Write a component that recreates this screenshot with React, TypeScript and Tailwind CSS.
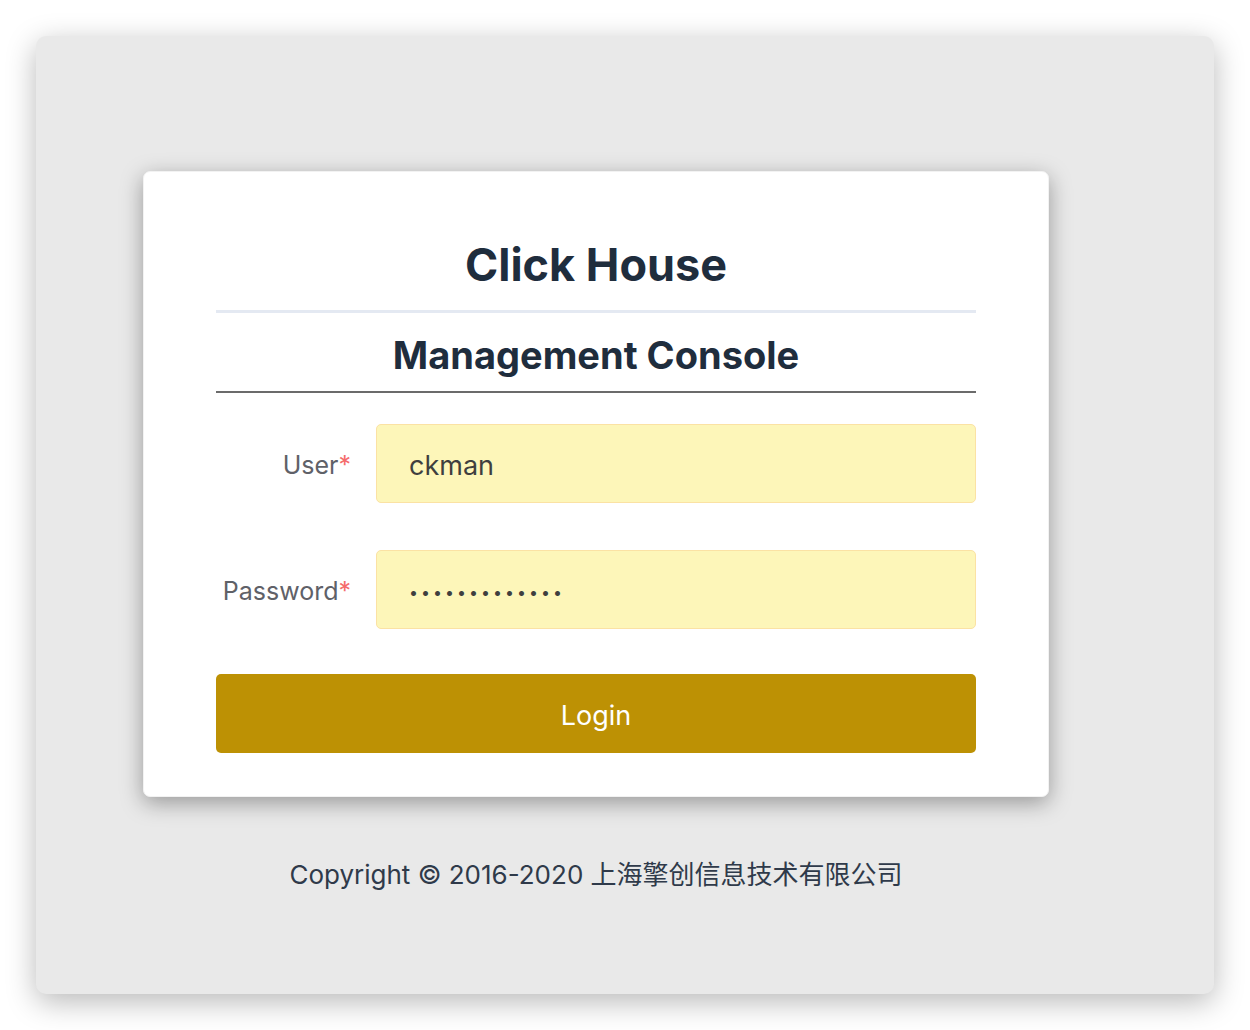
import React from "react";

const FONT = { fontFamily: 'Inter, "Noto Sans CJK SC", sans-serif' };

function Field({ label, value, type }: { label: string; value: string; type: string }) {
  const isPwd = type === "password";
  return (
    <div className="flex items-center">
      <label className="w-[160px] shrink-0 pr-[25px] pt-[4px] text-right text-[25px] text-[#5f6168]">
        {label}
        <span className="text-[#f56c6c]">*</span>
      </label>
      <input
        type={type}
        defaultValue={value}
        readOnly
        className={`w-[600px] h-[79px] rounded-[5px] border border-[#fbe2a4] bg-[#fdf6b9] pl-[32px] pt-[4px] text-[#3f3f3f] outline-none ${
          isPwd ? "text-[16px] tracking-[3px]" : "text-[27px]"
        }`}
      />
    </div>
  );
}

export default function App() {
  return (
    <div className="w-[1250px] h-[1030px] bg-white pt-[36px] pl-[36px]" style={FONT}>
      <div className="w-[1178px] h-[958px] rounded-[10px] bg-[#e9e9e9] shadow-[0_8px_30px_rgba(0,0,0,0.28)] pt-[135px] pl-[107px]">
        {/* Login card */}
        <div className="w-[906px] h-[626px] rounded-[7px] bg-white border border-[#f2f2f2] shadow-[0_6px_22px_rgba(0,0,0,0.35)] px-[72px] pt-[69px]">
          <h1 className="text-center text-[45px] leading-[48px] font-bold text-[#1f2d3d]">Click House</h1>
          <div className="mt-[21px] h-[3px] bg-[#e4e9f2]" />
          <h2 className="mt-[22px] text-center text-[38px] leading-[40px] font-bold text-[#1f2d3d]">
            Management Console
          </h2>
          <div className="mt-[16px] h-[2px] bg-[#6b6b6b]" />

          <div className="mt-[31px] flex flex-col gap-[47px]">
            <Field label="User" value="ckman" type="text" />
            <Field label="Password" value="ckman12345678" type="password" />
          </div>

          <button className="mt-[45px] w-full h-[79px] rounded-[5px] bg-[#bd9104] pt-[6px] text-white text-[27px]">
            Login
          </button>
        </div>

        <div className="w-[906px] mt-[58px] text-center text-[26px] text-[#2f3a4a]">
          Copyright © 2016-2020 上海擎创信息技术有限公司
        </div>
      </div>
    </div>
  );
}
